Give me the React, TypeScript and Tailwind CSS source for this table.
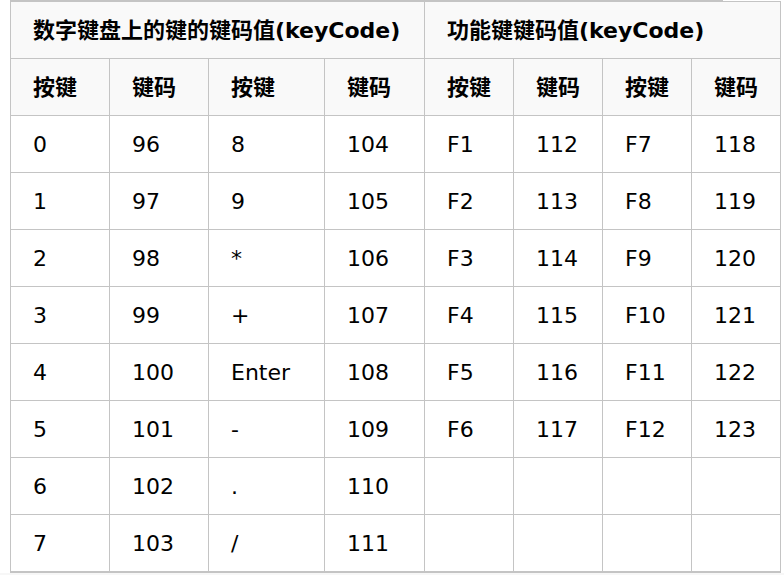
import React from 'react';

const numpadRows: [string, string, string, string][] = [
  ['0', '96', '8', '104'],
  ['1', '97', '9', '105'],
  ['2', '98', '*', '106'],
  ['3', '99', '+', '107'],
  ['4', '100', 'Enter', '108'],
  ['5', '101', '-', '109'],
  ['6', '102', '.', '110'],
  ['7', '103', '/', '111'],
];

const fnRows: [string, string, string, string][] = [
  ['F1', '112', 'F7', '118'],
  ['F2', '113', 'F8', '119'],
  ['F3', '114', 'F9', '120'],
  ['F4', '115', 'F10', '121'],
  ['F5', '116', 'F11', '122'],
  ['F6', '117', 'F12', '123'],
  ['', '', '', ''],
  ['', '', '', ''],
];

function Cell({ children, head }: { children?: React.ReactNode; head?: boolean }) {
  return (
    <div
      className={
        'flex h-[57px] items-center border-r border-b border-[#c4c4c4] pl-[22px] ' +
        (head ? 'bg-[#f9f9f9] font-bold' : 'bg-white')
      }
    >
      {children}
    </div>
  );
}

export default function App() {
  return (
    <div
      className="h-[575px] w-[784px] overflow-hidden bg-white text-[22px] text-black"
      style={{ fontFamily: '"DejaVu Sans", "Noto Sans CJK SC", sans-serif' }}
    >
      <div className="ml-[10px] h-px w-[713px] bg-[#c4c4c4]" />
      <div className="ml-[10px] grid w-[771px] grid-cols-[99px_99px_116px_100px_89px_89px_89px_89px] border-t border-b border-l border-[#c4c4c4]">
        <div className="col-span-4 flex h-[57px] items-center border-r border-b border-[#c4c4c4] bg-[#f9f9f9] pl-[22px] font-bold">
          数字键盘上的键的键码值(keyCode)
        </div>
        <div className="col-span-4 flex h-[57px] items-center border-r border-b border-[#c4c4c4] bg-[#f9f9f9] pl-[22px] font-bold">
          功能键键码值(keyCode)
        </div>

        {['按键', '键码', '按键', '键码', '按键', '键码', '按键', '键码'].map((t, i) => (
          <Cell key={i} head>
            {t}
          </Cell>
        ))}

        {numpadRows.map((row, r) => (
          <React.Fragment key={r}>
            {row.map((v, i) => (
              <Cell key={'a' + i}>{v}</Cell>
            ))}
            {fnRows[r].map((v, i) => (
              <Cell key={'b' + i}>{v}</Cell>
            ))}
          </React.Fragment>
        ))}
      </div>
      <div className="h-[4px] bg-[#f7f7f7]" />
    </div>
  );
}
